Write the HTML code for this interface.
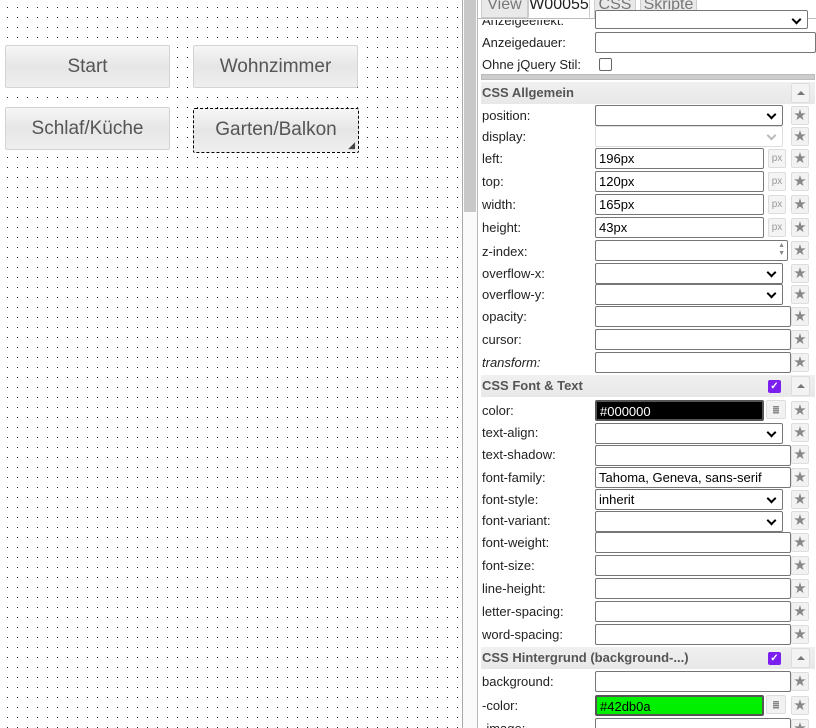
<!DOCTYPE html>
<html><head><meta charset="utf-8"><style>
*{box-sizing:border-box;margin:0;padding:0}
html,body{width:816px;height:728px;overflow:hidden}
body{position:relative;background:#fff;font-family:"Liberation Sans",sans-serif;}
#grid{position:absolute;left:0;top:0;width:462px;height:728px}
.btn{position:absolute;width:165px;height:43px;border:1px solid #d3d3d3;border-radius:2px;background:linear-gradient(#f6f6f6,#e6e6e6 50%,#efefef);color:#555;font-size:19px;text-align:center;line-height:41px}
#sb1{position:absolute;left:462px;top:0;width:1px;height:728px;background:#aaa}
#sb{position:absolute;left:463px;top:0;width:14px;height:728px;background:#fafafa}
#thumb{position:absolute;left:464px;top:0;width:12px;height:212px;background:#c8c8c8}
#sb2{position:absolute;left:477px;top:0;width:1px;height:728px;background:#bbb}
.tab{position:absolute;top:-8px;height:26px;border:1px solid #ccc;background:#e9e9e9;color:#777;font-size:16px;line-height:24px;text-align:center;border-radius:3px 3px 0 0}
.tab.a{background:#fff;color:#222;border-bottom-color:#fff}
#tabline{position:absolute;left:478px;top:18px;width:338px;height:1px;background:#bbb}
.l{position:absolute;left:482px;font-size:13px;color:#222;line-height:16px;margin-top:1px}
.in{position:absolute;left:595px;height:21px;border:1px solid #767676;border-radius:2px;background:#fff;font-size:13px;line-height:19px;padding-left:3px;color:#000}
.sel::after{content:"";position:absolute;right:7px;top:5px;width:5px;height:5px;border-right:2px solid #000;border-bottom:2px solid #000;transform:rotate(45deg)}
.dis{border-color:#ddd}.dis::after{border-color:#bbb}
.px{position:absolute;left:768px;width:18px;height:19px;border:1px solid #ddd;background:#f4f4f4;color:#999;font-size:10px;text-align:center;line-height:17px;border-radius:2px}
.st{position:absolute;left:791px;width:18px;height:19px;border:1px solid #ddd;background:#f2f2f2;border-radius:2px;color:#888;font-size:15px;text-align:center;line-height:17px}
.hd{position:absolute;left:481px;width:334px;height:22px;background:linear-gradient(#f0f0f0,#e8e8e8);font-size:13px;font-weight:bold;color:#555;padding-left:1px;line-height:22px}
.ar{position:absolute;left:791px;width:19px;height:20px;border:1px solid #ddd;background:#f3f3f3;border-radius:2px}
.ar::after{content:"";position:absolute;left:5px;top:7px;border-left:4px solid transparent;border-right:4px solid transparent;border-bottom:4px solid #777}
.cb{position:absolute;left:768px;width:13px;height:13px;background:#7b1ff0;border-radius:2px;color:#fff;font-size:10px;line-height:13px;text-align:center;font-weight:bold}
.cbtn{position:absolute;left:766px;width:20px;height:19px;border:1px solid #ddd;background:#f2f2f2;border-radius:2px}
.cbtn::after{content:"";position:absolute;left:6px;top:5px;width:6px;height:8px;background:repeating-linear-gradient(#888 0 1px,#bbb 1px 2px)}
</style></head><body>
<svg id="grid" width="462" height="728"><defs><pattern id="p" width="10" height="10" patternUnits="userSpaceOnUse"><rect x="7" y="7" width="1" height="1" fill="#222"/></pattern></defs><rect width="462" height="728" fill="url(#p)"/></svg>
<div class="btn" style="left:5px;top:45px">Start</div>
<div class="btn" style="left:193px;top:45px">Wohnzimmer</div>
<div class="btn" style="left:5px;top:107px">Schlaf/Küche</div>
<div class="btn" style="left:193px;top:108px;border:1px dashed #000;width:166px;height:45px">Garten/Balkon<span style="position:absolute;right:3px;bottom:-14px;font-size:9px;color:#444">◢</span></div>
<div id="sb"></div><div id="sb1"></div><div id="thumb"></div><div id="sb2"></div>

<div class="tab" style="left:481px;width:47px">View</div>
<div class="tab a" style="left:528px;width:62px">W00055</div>
<div class="tab" style="left:594px;width:42px">CSS</div>
<div class="tab" style="left:640px;width:57px">Skripte</div>
<div id="tabline"></div>

<div class="l" style="top:19px;height:8px;overflow:hidden"><span style="position:relative;top:-7px">Anzeigeeffekt:</span></div>
<div class="in sel" style="top:10px;width:213px;height:19px"></div>
<div class="l" style="top:34px">Anzeigedauer:</div>
<div class="in" style="top:32px;width:221px"></div>
<div class="l" style="top:56px">Ohne jQuery Stil:</div>
<div style="position:absolute;left:599px;top:58px;width:13px;height:13px;border:1px solid #666;border-radius:2px"></div>
<div style="position:absolute;left:481px;top:74px;width:334px;height:6px;background:#ccc;border:1px solid #bbb"></div>

<div class="hd" style="top:82px">CSS Allgemein</div><div class="ar" style="top:83px"></div>
<div class="l" style="top:107px">position:</div><div class="in sel" style="top:105px;width:188px"></div><div class="st" style="top:106px">★</div>
<div class="l" style="top:128px">display:</div><div class="in sel dis" style="top:126px;width:188px"></div><div class="st" style="top:127px">★</div>
<div class="l" style="top:150px">left:</div><div class="in" style="top:148px;width:169px">196px</div><div class="px" style="top:149px">px</div><div class="st" style="top:149px">★</div>
<div class="l" style="top:173px">top:</div><div class="in" style="top:171px;width:169px">120px</div><div class="px" style="top:172px">px</div><div class="st" style="top:172px">★</div>
<div class="l" style="top:196px">width:</div><div class="in" style="top:194px;width:169px">165px</div><div class="px" style="top:195px">px</div><div class="st" style="top:195px">★</div>
<div class="l" style="top:219px">height:</div><div class="in" style="top:217px;width:169px">43px</div><div class="px" style="top:218px">px</div><div class="st" style="top:218px">★</div>
<div class="l" style="top:243px">z-index:</div><div class="in" style="top:240px;width:193px"><span style="position:absolute;right:2px;top:1px;font-size:7px;color:#888;line-height:8px">▲<br>▼</span></div><div class="st" style="top:241px">★</div>
<div class="l" style="top:265px">overflow-x:</div><div class="in sel" style="top:263px;width:188px"></div><div class="st" style="top:264px">★</div>
<div class="l" style="top:286px">overflow-y:</div><div class="in sel" style="top:284px;width:188px"></div><div class="st" style="top:285px">★</div>
<div class="l" style="top:308px">opacity:</div><div class="in" style="top:306px;width:196px"></div><div class="st" style="top:307px">★</div>
<div class="l" style="top:331px">cursor:</div><div class="in" style="top:329px;width:196px"></div><div class="st" style="top:330px">★</div>
<div class="l" style="top:354px;font-style:italic">transform:</div><div class="in" style="top:352px;width:196px"></div><div class="st" style="top:353px">★</div>

<div class="hd" style="top:375px">CSS Font &amp; Text</div><div class="cb" style="top:380px">✓</div><div class="ar" style="top:376px"></div>
<div class="l" style="top:402px">color:</div><div class="in" style="top:400px;width:169px;background:#000;color:#fff;border:2px solid #555">#000000</div><div class="cbtn" style="top:400px"></div><div class="st" style="top:401px">★</div>
<div class="l" style="top:424px">text-align:</div><div class="in sel" style="top:423px;width:188px"></div><div class="st" style="top:423px">★</div>
<div class="l" style="top:446px">text-shadow:</div><div class="in" style="top:445px;width:196px"></div><div class="st" style="top:445px">★</div>
<div class="l" style="top:469px">font-family:</div><div class="in" style="top:467px;width:196px">Tahoma, Geneva, sans-serif</div><div class="st" style="top:468px">★</div>
<div class="l" style="top:491px">font-style:</div><div class="in sel" style="top:489px;width:188px">inherit</div><div class="st" style="top:490px">★</div>
<div class="l" style="top:512px">font-variant:</div><div class="in sel" style="top:511px;width:188px"></div><div class="st" style="top:511px">★</div>
<div class="l" style="top:534px">font-weight:</div><div class="in" style="top:532px;width:196px"></div><div class="st" style="top:533px">★</div>
<div class="l" style="top:557px">font-size:</div><div class="in" style="top:555px;width:196px"></div><div class="st" style="top:556px">★</div>
<div class="l" style="top:580px">line-height:</div><div class="in" style="top:578px;width:196px"></div><div class="st" style="top:579px">★</div>
<div class="l" style="top:603px">letter-spacing:</div><div class="in" style="top:601px;width:196px"></div><div class="st" style="top:602px">★</div>
<div class="l" style="top:626px">word-spacing:</div><div class="in" style="top:624px;width:196px"></div><div class="st" style="top:625px">★</div>

<div class="hd" style="top:647px">CSS Hintergrund (background-...)</div><div class="cb" style="top:652px">✓</div><div class="ar" style="top:648px"></div>
<div class="l" style="top:673px">background:</div><div class="in" style="top:671px;width:196px"></div><div class="st" style="top:672px">★</div>
<div class="l" style="top:697px">-color:</div><div class="in" style="top:695px;width:169px;background:#00f000;border:2px solid #555">#42db0a</div><div class="cbtn" style="top:695px"></div><div class="st" style="top:696px">★</div>
<div class="l" style="top:720px">-image:</div><div class="in" style="top:718px;width:196px"></div><div class="st" style="top:719px">★</div>
</body></html>
